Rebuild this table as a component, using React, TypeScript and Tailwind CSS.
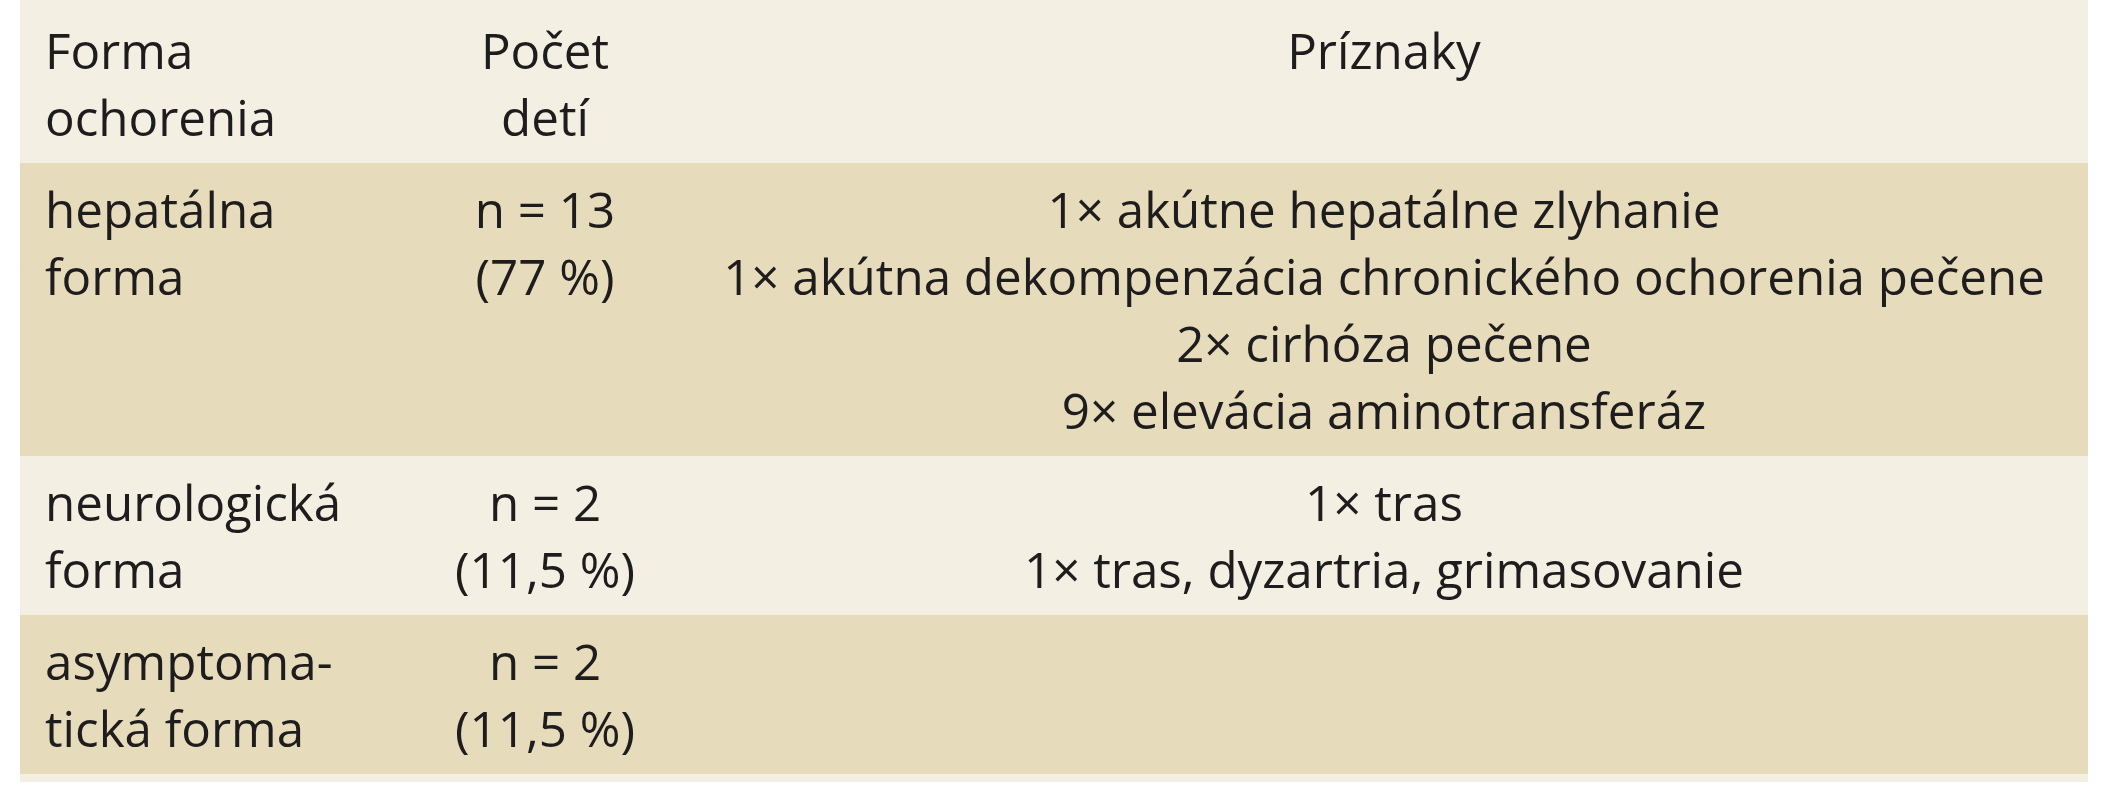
import React from "react";

const rows = [
  {
    form: ["hepatálna", "forma"],
    count: ["n = 13", "(77 %)"],
    symptoms: [
      "1× akútne hepatálne zlyhanie",
      "1× akútna dekompenzácia chronického ochorenia pečene",
      "2× cirhóza pečene",
      "9× elevácia aminotransferáz",
    ],
    bg: "bg-[#e6dcbc]",
  },
  {
    form: ["neurologická", "forma"],
    count: ["n = 2", "(11,5 %)"],
    symptoms: ["1× tras", "1× tras, dyzartria, grimasovanie"],
    bg: "bg-[#f3efe2]",
  },
  {
    form: ["asymptoma-", "tická forma"],
    count: ["n = 2", "(11,5 %)"],
    symptoms: [],
    bg: "bg-[#e6dcbc]",
  },
];

function Lines({ items }: { items: string[] }) {
  return (
    <>
      {items.map((t, i) => (
        <div key={i} className="whitespace-nowrap">
          {t}
        </div>
      ))}
    </>
  );
}

export default function App() {
  return (
    <div className="w-[2122px] h-[800px] bg-white">
      <div
        className="ml-[20px] w-[2068px] text-[49.3px] leading-[67px] font-medium text-[#1e1c1d] bg-[#f3efe2] pb-[8px]"
        style={{ fontFamily: '"Open Sans", "Liberation Sans", sans-serif' }}
      >
        <div className="grid grid-cols-[390px_270px_1fr] pt-[16px] pb-[13px] bg-[#f3efe2]">
          <div className="pl-[25px]">
            <Lines items={["Forma", "ochorenia"]} />
          </div>
          <div className="text-center">
            <Lines items={["Počet", "detí"]} />
          </div>
          <div className="text-center">
            <Lines items={["Príznaky"]} />
          </div>
        </div>
        {rows.map((r, i) => (
          <div
            key={i}
            className={`grid grid-cols-[390px_270px_1fr] pt-[12px] pb-[13px] ${r.bg}`}
          >
            <div className="pl-[25px]">
              <Lines items={r.form} />
            </div>
            <div className="text-center">
              <Lines items={r.count} />
            </div>
            <div className="text-center">
              <Lines items={r.symptoms} />
            </div>
          </div>
        ))}
      </div>
    </div>
  );
}
